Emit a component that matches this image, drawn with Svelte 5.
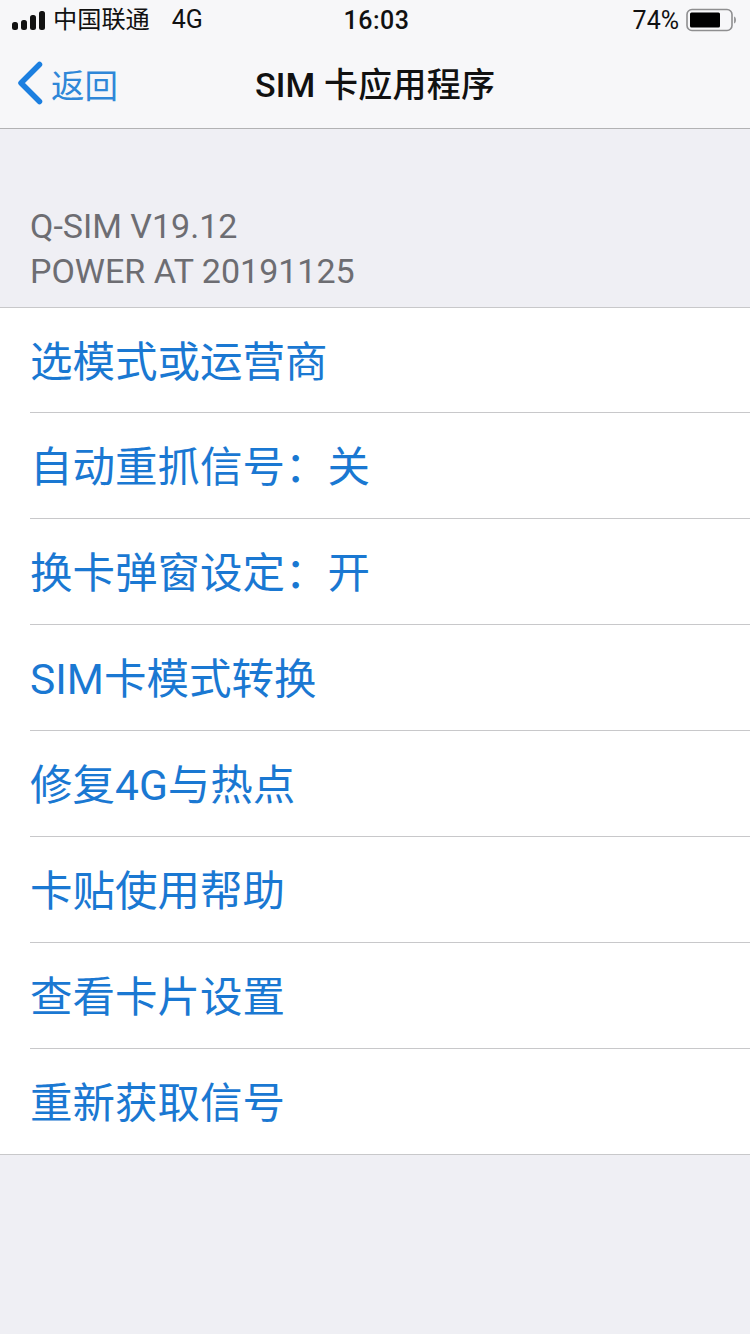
<script>
	const rows = [
		'选模式或运营商',
		'自动重抓信号：关',
		'换卡弹窗设定：开',
		'SIM卡模式转换',
		'修复4G与热点',
		'卡贴使用帮助',
		'查看卡片设置',
		'重新获取信号'
	];
</script>

<div class="page">
	<header class="top">
		<div class="status">
			<div class="left">
				<span class="signal"><i></i><i></i><i></i><i></i></span>
				<span class="carrier">中国联通</span>
				<span class="net">4G</span>
			</div>
			<div class="time">16:03</div>
			<div class="right">
				<span>74%</span>
				<svg width="50" height="24" viewBox="0 0 50 24">
					<rect x="1" y="1.5" width="45" height="21" rx="5" fill="none" stroke="#8e8e90" stroke-width="1.6" />
					<rect x="4" y="4.5" width="30" height="15" rx="1.5" fill="#000" />
					<path d="M48 8.5c1.500.4 2 1.800 2 3.500s-.5 3.100-2 3.500z" fill="#9a9a9c" />
				</svg>
			</div>
		</div>
		<nav class="nav">
			<div class="back">
				<svg width="28" height="44" viewBox="0 0 28 44">
					<path d="M23.500 3.500 5 22l18.500 18.500" fill="none" stroke="#1c7fe0" stroke-width="5.500" stroke-linecap="round" stroke-linejoin="round" />
				</svg>
				<span>返回</span>
			</div>
			<h1>SIM 卡应用程序</h1>
		</nav>
	</header>

	<section class="note">
		<p>Q-SIM V19.12</p>
		<p>POWER AT 20191125</p>
	</section>

	<ul class="list">
		{#each rows as row}
			<li><span>{row}</span></li>
		{/each}
	</ul>
</div>

<style>
	:global(body) {
		margin: 0;
		background: #efeff4;
	}

	.page {
		width: 750px;
		height: 1334px;
		overflow: hidden;
		font-family: Roboto, 'Noto Sans CJK SC', sans-serif;
		background: #efeff4;
	}

	.top {
		height: 128px;
		background: #f7f7f9;
		border-bottom: 1px solid #b2b2b4;
	}

	.status {
		height: 40px;
		display: grid;
		grid-template-columns: 1fr auto 1fr;
		align-items: center;
		padding: 0 14px 0 12px;
		font-size: 24px;
		color: #111;
	}

	.left {
		display: flex;
		align-items: center;
	}

	.signal {
		display: flex;
		align-items: flex-end;
		gap: 3px;
		margin-right: 8px;
	}

	.signal i {
		width: 6px;
		border-radius: 2.5px;
		background: #111;
	}

	.signal i:nth-child(1) {
		height: 8px;
	}

	.signal i:nth-child(2) {
		height: 10px;
	}

	.signal i:nth-child(3) {
		height: 15px;
	}

	.signal i:nth-child(4) {
		height: 19px;
	}

	.carrier {
		font-size: 24.2px;
		line-height: 26px;
	}

	.net {
		margin-left: 22px;
		font-size: 25px;
		line-height: 26px;
	}

	.time {
		margin-left: 5px;
		font-size: 25px;
		font-weight: 500;
		letter-spacing: 0.5px;
	}

	.right {
		display: flex;
		align-items: center;
		justify-content: flex-end;
		gap: 7px;
		font-size: 25px;
	}

	.nav {
		position: relative;
		height: 88px;
		display: flex;
		align-items: center;
		justify-content: center;
	}

	.back {
		position: absolute;
		left: 16px;
		top: 0;
		height: 86px;
		display: flex;
		align-items: center;
		gap: 7px;
		font-size: 33.5px;
		color: #2f87d8;
	}

	h1 {
		margin: 0 0 4px;
		font-size: 34px;
		font-weight: 500;
		letter-spacing: 0.2px;
		color: #111;
	}

	.note {
		height: 178px;
		box-sizing: border-box;
		padding: 75px 30px 0;
		font-size: 34px;
		line-height: 45px;
		color: #6d6d72;
	}

	.note p {
		margin: 0;
	}

	.list {
		margin: 0;
		padding: 0;
		list-style: none;
		background: #fff;
		border-top: 1px solid #c8c8ca;
		border-bottom: 1px solid #c8c8ca;
	}

	li {
		height: 106px;
		box-sizing: border-box;
		padding-bottom: 5px;
		margin-left: 30px;
		display: flex;
		align-items: center;
		font-size: 42.5px;
		color: #1a78d2;
		box-shadow: inset 0 -1px 0 #c8c8ca;
	}

	li:first-child,
	li:last-child {
		height: 105px;
	}

	li:last-child {
		box-shadow: none;
	}
</style>
